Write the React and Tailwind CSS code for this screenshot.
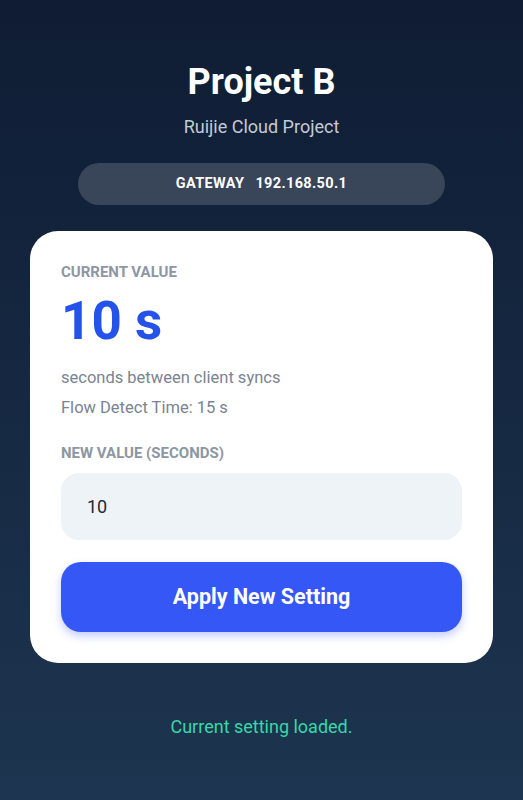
export default function App() {
  return (
    <div
      className="min-h-[800px] bg-gradient-to-b from-[#0f1c34] to-[#1d3550] px-[30px] pt-[61px] text-center"
      style={{ fontFamily: "Roboto, 'Noto Sans', sans-serif" }}
    >
      <h1 className="text-[36px] font-bold leading-[42px] text-white">Project B</h1>
      <p className="mt-[13px] text-[18px] leading-[22px] text-[#c3cad6]">Ruijie Cloud Project</p>

      <div className="mx-auto mt-[25px] flex h-[42px] w-[367px] items-center justify-center gap-[11px] rounded-full bg-[#394559] text-[14.5px] font-bold tracking-wide text-white">
        <span>GATEWAY</span>
        <span>192.168.50.1</span>
      </div>

      <div className="mt-[26px] rounded-[28px] bg-white px-[31px] pt-[32px] pb-[31px] text-left">
        <div className="text-[15px] font-bold leading-[18px] text-[#8d96a3]">CURRENT VALUE</div>
        <div className="mt-[10px] text-[53px] font-bold leading-[60px] text-[#2452ea]">10 s</div>
        <p className="mt-[17px] text-[16.5px] leading-[20px] text-[#7a8391]">seconds between client syncs</p>
        <p className="mt-[10px] text-[16.5px] leading-[20px] text-[#7a8391]">Flow Detect Time: 15 s</p>

        <label className="mt-[26px] block text-[15px] font-bold leading-[18px] text-[#8d96a3]">
          NEW VALUE (SECONDS)
        </label>
        <input
          type="number"
          defaultValue={10}
          className="mt-[11px] block h-[67px] w-full rounded-[18px] bg-[#eef3f7] px-[26px] text-[18px] text-[#1f2937] outline-none"
        />
        <button className="mt-[22px] h-[70px] w-full rounded-[20px] bg-[#3557f6] text-[21.5px] font-bold text-white shadow-[0_4px_8px_rgba(53,87,246,0.3)]">
          Apply New Setting
        </button>
      </div>

      <p className="mt-[50px] text-[18px] leading-[27px] text-[#3ad7a8]">Current setting loaded.</p>
    </div>
  );
}
